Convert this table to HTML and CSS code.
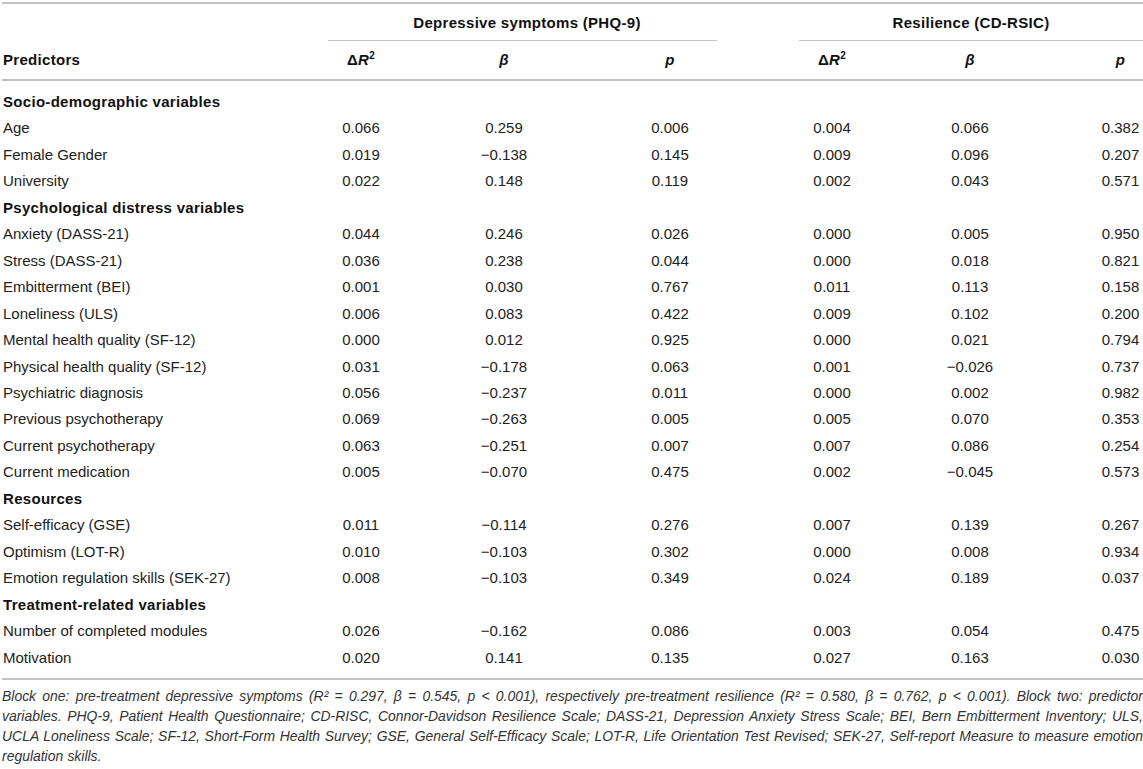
FILE: index.html
```html
<!DOCTYPE html>
<html lang="en">
<head>
<meta charset="utf-8">
<title>Regression table</title>
<link rel="stylesheet" href="styles.css">
</head>
<body>
<div class="wrap">
<table class="tbl">
  <colgroup>
    <col class="w1"><col class="w2"><col class="w3"><col class="w4"><col class="w5"><col class="w6"><col class="w7">
  </colgroup>
  <thead>
    <tr class="hr1">
      <th></th>
      <th colspan="3"><div class="span span-dep">Depressive symptoms (PHQ-9)</div></th>
      <th colspan="3"><div class="span span-res">Resilience (CD-RSIC)</div></th>
    </tr>
    <tr class="hr2">
      <th class="lbl">Predictors</th>
      <th>Δ<i>R</i><sup>2</sup></th>
      <th><i>β</i></th>
      <th><i>p</i></th>
      <th>Δ<i>R</i><sup>2</sup></th>
      <th><i>β</i></th>
      <th class="last"><i>p</i></th>
    </tr>
  </thead>
  <tbody>
    <tr class="sec first"><td colspan="7">Socio-demographic variables</td></tr>
    <tr><td>Age</td><td>0.066</td><td>0.259</td><td>0.006</td><td>0.004</td><td>0.066</td><td class="last">0.382</td></tr>
    <tr><td>Female Gender</td><td>0.019</td><td>−0.138</td><td>0.145</td><td>0.009</td><td>0.096</td><td class="last">0.207</td></tr>
    <tr><td>University</td><td>0.022</td><td>0.148</td><td>0.119</td><td>0.002</td><td>0.043</td><td class="last">0.571</td></tr>
    <tr class="sec"><td colspan="7">Psychological distress variables</td></tr>
    <tr><td>Anxiety (DASS-21)</td><td>0.044</td><td>0.246</td><td>0.026</td><td>0.000</td><td>0.005</td><td class="last">0.950</td></tr>
    <tr><td>Stress (DASS-21)</td><td>0.036</td><td>0.238</td><td>0.044</td><td>0.000</td><td>0.018</td><td class="last">0.821</td></tr>
    <tr><td>Embitterment (BEI)</td><td>0.001</td><td>0.030</td><td>0.767</td><td>0.011</td><td>0.113</td><td class="last">0.158</td></tr>
    <tr><td>Loneliness (ULS)</td><td>0.006</td><td>0.083</td><td>0.422</td><td>0.009</td><td>0.102</td><td class="last">0.200</td></tr>
    <tr><td>Mental health quality (SF-12)</td><td>0.000</td><td>0.012</td><td>0.925</td><td>0.000</td><td>0.021</td><td class="last">0.794</td></tr>
    <tr><td>Physical health quality (SF-12)</td><td>0.031</td><td>−0.178</td><td>0.063</td><td>0.001</td><td>−0.026</td><td class="last">0.737</td></tr>
    <tr><td>Psychiatric diagnosis</td><td>0.056</td><td>−0.237</td><td>0.011</td><td>0.000</td><td>0.002</td><td class="last">0.982</td></tr>
    <tr><td>Previous psychotherapy</td><td>0.069</td><td>−0.263</td><td>0.005</td><td>0.005</td><td>0.070</td><td class="last">0.353</td></tr>
    <tr><td>Current psychotherapy</td><td>0.063</td><td>−0.251</td><td>0.007</td><td>0.007</td><td>0.086</td><td class="last">0.254</td></tr>
    <tr><td>Current medication</td><td>0.005</td><td>−0.070</td><td>0.475</td><td>0.002</td><td>−0.045</td><td class="last">0.573</td></tr>
    <tr class="sec"><td colspan="7">Resources</td></tr>
    <tr><td>Self-efficacy (GSE)</td><td>0.011</td><td>−0.114</td><td>0.276</td><td>0.007</td><td>0.139</td><td class="last">0.267</td></tr>
    <tr><td>Optimism (LOT-R)</td><td>0.010</td><td>−0.103</td><td>0.302</td><td>0.000</td><td>0.008</td><td class="last">0.934</td></tr>
    <tr><td>Emotion regulation skills (SEK-27)</td><td>0.008</td><td>−0.103</td><td>0.349</td><td>0.024</td><td>0.189</td><td class="last">0.037</td></tr>
    <tr class="sec"><td colspan="7">Treatment-related variables</td></tr>
    <tr><td>Number of completed modules</td><td>0.026</td><td>−0.162</td><td>0.086</td><td>0.003</td><td>0.054</td><td class="last">0.475</td></tr>
    <tr class="final"><td>Motivation</td><td>0.020</td><td>0.141</td><td>0.135</td><td>0.027</td><td>0.163</td><td class="last">0.030</td></tr>
  </tbody>
</table>
<p class="note">Block one: pre-treatment depressive symptoms (R² = 0.297, β = 0.545, p &lt; 0.001), respectively pre-treatment resilience (R² = 0.580, β = 0.762, p &lt; 0.001). Block two: predictor variables. PHQ-9, Patient Health Questionnaire; CD-RISC, Connor-Davidson Resilience Scale; DASS-21, Depression Anxiety Stress Scale; BEI, Bern Embitterment Inventory; ULS, UCLA Loneliness Scale; SF-12, Short-Form Health Survey; GSE, General Self-Efficacy Scale; LOT-R, Life Orientation Test Revised; SEK-27, Self-report Measure to measure emotion regulation skills.</p>
</div>
</body>
</html>
```
FILE: styles.css
```css
html, body {
  margin: 0;
  padding: 0;
  background: #ffffff;
}

body {
  font-family: "Liberation Sans", Arial, sans-serif;
  color: #222222;
  overflow: hidden;
}

.wrap {
  padding: 2px 0 0 2px;
  width: 1141px;
}

.tbl {
  width: 1141px;
  table-layout: fixed;
  border-collapse: collapse;
  border-top: 2px solid #c2c2c2;
  border-bottom: 2px solid #c2c2c2;
  font-size: 15px;
}

.w1 { width: 288px; }
.w2 { width: 142px; }
.w3 { width: 144px; }
.w4 { width: 188px; }
.w5 { width: 136px; }
.w6 { width: 140px; }
.w7 { width: 103px; }

.tbl th {
  font-weight: bold;
  color: #111111;
  text-align: center;
  padding: 0;
  letter-spacing: 0.3px;
}

.hr1 th {
  line-height: 18px;
}

.span {
  padding: 10px 0 8px;
  border-bottom: 1px solid #c2c2c2;
}

.span-dep {
  margin: 0 47px 0 38px;
  padding-left: 9px;
}

.span-res {
  margin-left: 35px;
}

.hr2 th {
  line-height: 18px;
  padding: 10px 0 10px;
  border-bottom: 2px solid #c2c2c2;
}

.hr2 th.lbl {
  text-align: left;
  padding-left: 1px;
}

.tbl sup {
  font-size: 10px;
  line-height: 0;
  vertical-align: 6px;
  font-style: normal;
}

.tbl td {
  padding: 0;
  line-height: 26.45px;
  text-align: center;
  white-space: nowrap;
}

.tbl td:first-child {
  text-align: left;
  padding-left: 1px;
}

.tbl .last {
  padding-left: 58px;
}

.sec td {
  font-weight: bold;
  color: #111111;
  letter-spacing: 0.3px;
}

.first td {
  padding-top: 8px;
}

.final td {
  padding-bottom: 7px;
}

.note {
  margin: 6px 0 0;
  font-size: 13.95px;
  line-height: 20px;
  word-spacing: 0.3px;
  font-style: italic;
  color: #333333;
  text-align: justify;
}
```
